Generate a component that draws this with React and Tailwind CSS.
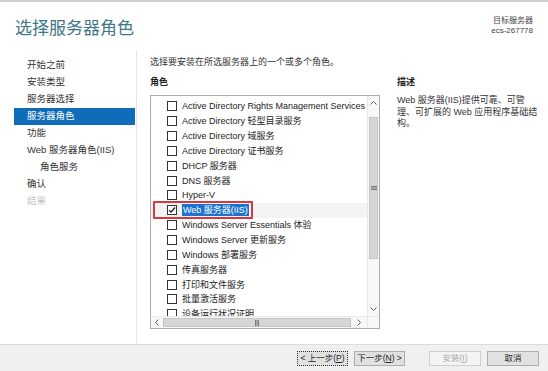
import React from "react";

const roles = [
  "Active Directory Rights Management Services",
  "Active Directory 轻型目录服务",
  "Active Directory 域服务",
  "Active Directory 证书服务",
  "DHCP 服务器",
  "DNS 服务器",
  "Hyper-V",
  "Web 服务器(IIS)",
  "Windows Server Essentials 体验",
  "Windows Server 更新服务",
  "Windows 部署服务",
  "传真服务器",
  "打印和文件服务",
  "批量激活服务",
  "设备运行状况证明",
];

const nav = [
  { t: "开始之前" },
  { t: "安装类型" },
  { t: "服务器选择" },
  { t: "服务器角色", sel: true },
  { t: "功能" },
  { t: "Web 服务器角色(IIS)" },
  { t: "角色服务", indent: true },
  { t: "确认" },
  { t: "结果", dis: true },
];

function Chevron({ dir }) {
  const paths = {
    up: "M1.5 5.5 L4.5 2.5 L7.5 5.5",
    down: "M1.5 2.5 L4.5 5.5 L7.5 2.5",
    left: "M5.5 1.5 L2.5 4.5 L5.5 7.5",
    right: "M2.5 1.5 L5.5 4.5 L2.5 7.5",
  };
  return (
    <svg width="9" height="9" viewBox="0 0 9 9">
      <path d={paths[dir]} fill="none" stroke="#606060" strokeWidth="1" />
    </svg>
  );
}

function Grip({ vertical }) {
  return vertical ? (
    <svg width="6" height="6" viewBox="0 0 6 6">
      <path d="M0 1.5H6M0 3H6M0 4.5H6" stroke="#606060" strokeWidth="0.8" />
    </svg>
  ) : (
    <svg width="6" height="6" viewBox="0 0 6 6">
      <path d="M1.5 0V6M3 0V6M4.5 0V6" stroke="#606060" strokeWidth="0.8" />
    </svg>
  );
}

function Checkbox({ checked }) {
  return (
    <div className="w-[10px] h-[10px] border border-[#333333] bg-white flex items-center justify-center shrink-0">
      {checked && (
        <svg width="8" height="8" viewBox="0 0 8 8">
          <path d="M1 4.2 L3 6.2 L7 1.5" fill="none" stroke="#111111" strokeWidth="1.2" />
        </svg>
      )}
    </div>
  );
}

export default function App() {
  return (
    <div className="w-[548px] h-[371px] bg-white flex flex-col border-t-2 border-[#cfcfcf] font-['Liberation_Sans','Noto_Sans_CJK_SC',sans-serif] text-[#262626] overflow-hidden">
      {/* header */}
      <div className="h-[48px] flex justify-between items-start px-[15px]">
        <div className="text-[17px] leading-[20px] mt-[17px] text-[#3f7688]">选择服务器角色</div>
        <div className="mt-[14px] text-[8px] leading-[10px] text-right text-[#444444]">
          <div>目标服务器</div>
          <div>ecs-267778</div>
        </div>
      </div>

      {/* body */}
      <div className="flex flex-1">
        <div className="w-[137px] pl-[14px] border-r border-[#e3e3e3] pt-[7px]">
          {nav.map((n, i) => (
            <div
              key={i}
              className={
                "h-[17px] w-[121px] flex items-center text-[9.5px] " +
                (n.sel ? "bg-[#0f6cb8] text-white " : n.dis ? "text-[#c4c4c4] " : "text-[#333333] ") +
                (n.indent ? "pl-[26px]" : "pl-[13px]")
              }
            >
              {n.t}
            </div>
          ))}
        </div>

        <div className="flex flex-1 pl-[13px]">
          <div className="w-[230px] flex flex-col">
            <div className="text-[9px] leading-[12px] mt-[6px] text-[#333333]">选择要安装在所选服务器上的一个或多个角色。</div>
            <div className="text-[9px] leading-[12px] mt-[8px] font-bold text-[#222222]">角色</div>
            <div className="mt-[7px] w-[230px] h-[234px] border border-[#abadb3] flex flex-col">
              <div className="flex flex-1 min-h-0">
                <div className="flex-1 overflow-hidden pt-[3px]">
                  {roles.map((r, i) => {
                    const sel = r === "Web 服务器(IIS)";
                    return (
                      <div
                        key={i}
                        className={"relative h-[14.85px] flex items-center pl-[16px] whitespace-nowrap text-[9px] text-[#222222] " + (sel ? "bg-[#f3f3f3]" : "")}
                      >
                        <Checkbox checked={sel} />
                        <span className={"ml-[5px] leading-[12px] " + (sel ? "bg-[#1a73cf] text-white px-[1px]" : "")}>{r}</span>
                        {sel && (
                          <div className="absolute left-[2px] top-[-2px] w-[100px] h-[18px] border-2 border-[#d8383c] rounded-[1px]" />
                        )}
                      </div>
                    );
                  })}
                </div>
                <div className="w-[12px] bg-[#f7f7f7] border-l border-[#e8e8e8] flex flex-col">
                  <div className="h-[15px] flex items-center justify-center">
                    <Chevron dir="up" />
                  </div>
                  <div className="mt-[6px] h-[142px] mx-[1px] bg-[#d6d6d6] border border-[#c6c6c6] flex items-center justify-center">
                    <Grip vertical />
                  </div>
                  <div className="flex-1" />
                  <div className="h-[14px] flex items-center justify-center">
                    <Chevron dir="down" />
                  </div>
                </div>
              </div>
              <div className="h-[12px] flex border-t border-[#e8e8e8]">
                <div className="flex-1 flex bg-[#f7f7f7]">
                  <div className="w-[12px] flex items-center justify-center">
                    <Chevron dir="left" />
                  </div>
                  <div className="w-[188px] my-[1px] bg-[#d6d6d6] border border-[#c6c6c6] flex items-center justify-center">
                    <Grip />
                  </div>
                  <div className="flex-1 flex items-center justify-center">
                    <Chevron dir="right" />
                  </div>
                </div>
                <div className="w-[12px] bg-[#f7f7f7] border-l border-[#e8e8e8]" />
              </div>
            </div>
          </div>

          <div className="ml-[17px] w-[130px]">
            <div className="text-[9px] leading-[12px] mt-[26px] font-bold text-[#222222]">描述</div>
            <div className="text-[9px] leading-[11.5px] mt-[7px] text-[#333333] whitespace-nowrap">
              Web 服务器(IIS)提供可靠、可管
              <br />
              理、可扩展的 Web 应用程序基础结
              <br />
              构。
            </div>
          </div>
        </div>
      </div>

      {/* footer */}
      <div className="h-[27px] bg-[#f0f0f0] border-t border-[#dcdcdc] flex items-center pr-[9px] justify-end">
        <button className="w-[51px] h-[15px] bg-[#e1e1e1] border border-dotted border-[#333333] text-[8.5px] leading-[13px] text-[#222222] flex items-center justify-center">
          &lt; 上一步(<span className="underline">P</span>)
        </button>
        <button className="ml-[6px] w-[51px] h-[15px] bg-[#e1e1e1] border border-[#adadad] text-[8.5px] leading-[13px] text-[#222222] flex items-center justify-center">
          下一步(<span className="underline">N</span>) &gt;
        </button>
        <button className="ml-[24px] w-[52px] h-[15px] bg-[#f4f4f4] border border-[#cfcfcf] text-[8.5px] leading-[13px] text-[#a8a8a8] flex items-center justify-center">
          安装(<span className="underline">I</span>)
        </button>
        <button className="ml-[6px] w-[52px] h-[15px] bg-[#e1e1e1] border border-[#adadad] text-[8.5px] leading-[13px] text-[#222222] flex items-center justify-center">
          取消
        </button>
      </div>
    </div>
  );
}
